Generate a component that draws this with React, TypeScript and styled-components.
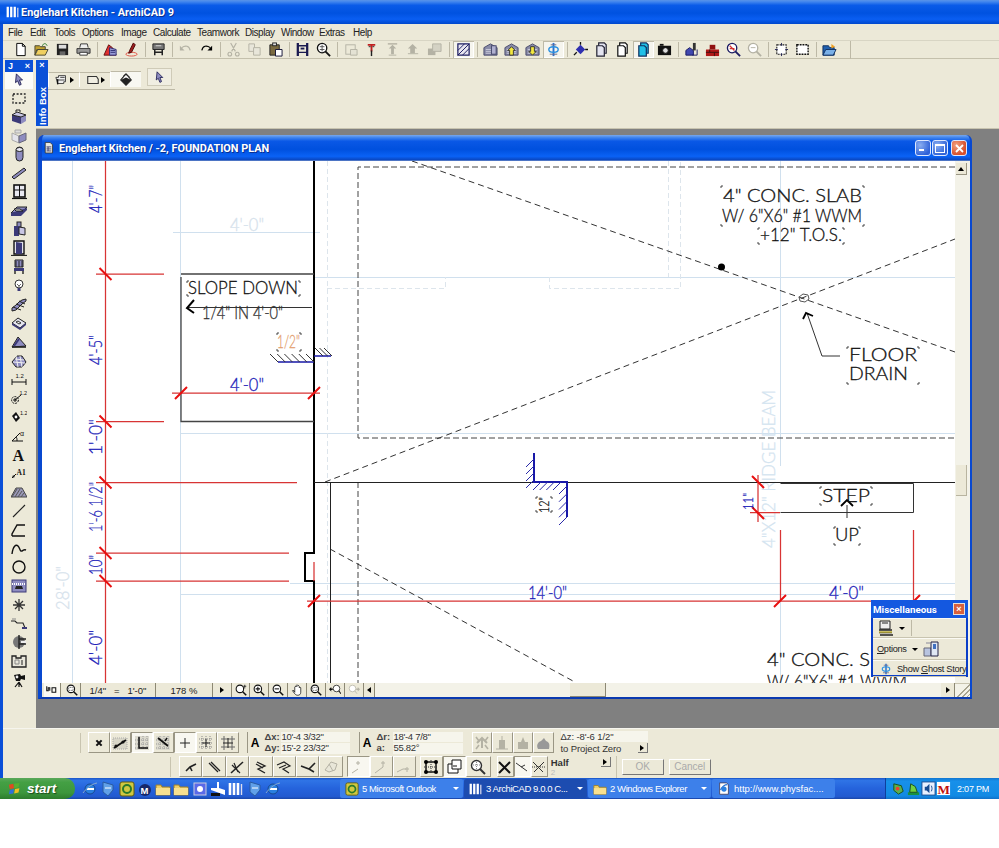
import React from "react";
import styled, { createGlobalStyle, css } from "styled-components";

const Global = createGlobalStyle`
  html, body { margin: 0; padding: 0; background: #fff; }
  body { font-family: "Liberation Sans", Arial, sans-serif; }
`;

const UI = `"Liberation Sans", Arial, sans-serif`;
const HEAD = `Roboto, "Liberation Sans", sans-serif`;

const Frame = styled.div`width: 999px; height: 799px; display: flex; flex-direction: column; overflow: hidden; background: #ece9d8;`;
const TitleBar = styled.div`
  height: 24px; flex: none; display: flex; align-items: center; gap: 1px; padding-left: 6px;
  background: linear-gradient(180deg, #5a94e8 0, #3f84ee 8%, #0a5be8 22%, #0052e0 55%, #0a5ef2 80%, #0048cc 100%);
`;
const TitleText = styled.span`font: 700 10.9px ${HEAD}; color: #fff; white-space: nowrap; text-shadow: 1px 1px 0 #0a2f90;`;
const Client = styled.div`flex: 1; display: flex; flex-direction: column; min-height: 0; border-left: 3px solid #0a4fd8;`;
const MenuBar = styled.div`height: 16px; flex: none; display: flex; align-items: center; padding-left: 5px;`;
const MenuItem = styled.span<{ $w: number }>`width: ${p => p.$w}px; flex: none; font: 10px ${UI}; letter-spacing: -.45px; color: #222;`;
const ToolBar = styled.div`
  height: 19px; flex: none; display: flex; align-items: center; padding-left: 7px;
  border-top: 1px solid #d8d5c4; border-bottom: 1px solid #c4c0ac; box-sizing: border-box;
`;
const TBtn = styled.div<{ $on?: boolean }>`
  width: 21px; height: 17px; flex: none; display: flex; align-items: center; justify-content: center;
  ${p => p.$on && css`background: #f6f5ee; box-shadow: inset 1px 1px 0 #bdb9a6, inset -1px -1px 0 #fff;`}
`;
const TSep = styled.div<{ $w?: number }>`
  width: ${p => p.$w ?? 6}px; height: 15px; flex: none; position: relative;
  &::after { content: ""; position: absolute; left: 45%; top: 0; bottom: 0; width: 1px; background: #bdb9a6; }
`;
const ToolEnd = styled.div`width: 10px; height: 18px; border-right: 1px solid #bdb9a6;`;
const Ico = styled.svg<{ $s?: number }>`width: ${p => p.$s ?? 16}px; height: ${p => p.$s ?? 16}px; flex: none; display: block;`;

const Workspace = styled.div`flex: 1; display: flex; min-height: 0;`;
const Palette = styled.div`width: 33px; flex: none; padding: 1px 3px 0 2px; box-sizing: border-box;`;
const PaletteHead = styled.div`height: 12px; background: #0a50d8; color: #fff; display: flex; justify-content: space-between; align-items: center; padding: 0 3px; font: 700 9px ${UI};`;
const PaletteList = styled.div`display: flex; flex-direction: column;`;
const PaletteTool = styled.div<{ $on?: boolean }>`
  height: ${p => (p.$on ? 16.6 : 18.78)}px; flex: none; display: flex; align-items: center; justify-content: center;
  ${p => p.$on && `background: #fcfcf8;`}
`;
const Main = styled.div`flex: 1; min-width: 0; display: flex; flex-direction: column;`;
const InfoArea = styled.div`height: 70px; flex: none; display: flex; align-items: flex-start; padding-top: 1px; box-sizing: border-box; border-bottom: 1px solid #c8c4b0;`;
const InfoStrip = styled.div`width: 12px; height: 66px; flex: none; background: #0a50d8; color: #fff; display: flex; flex-direction: column; align-items: center;`;
const InfoClose = styled.span`font: 700 9px ${UI}; line-height: 11px;`;
const InfoLabel = styled.span`font: 700 9.5px ${UI}; writing-mode: vertical-rl; transform: rotate(180deg); margin-top: 16px; white-space: nowrap;`;
const InfoPanel = styled.div`width: 127px; height: 30px; flex: none; display: flex; align-items: flex-end; padding-bottom: 1px; box-sizing: border-box; border-bottom: 1px solid #bdb9a6;`;
const InfoBtn = styled.div<{ $on?: boolean }>`
  width: 31px; height: 15px; flex: none; display: flex; align-items: center; justify-content: center; gap: 1px; margin-bottom: 1px;
  box-sizing: border-box; border-top: 1px solid #bdb9a6; border-left: 1px solid #fff;
  ${p => p.$on && `background: #f8f8f2; height: 16px;`}
`;
const InfoArrowBox = styled.div`width: 25px; height: 18px; margin: 0 0 2px 6px; display: flex; align-items: center; justify-content: center; box-sizing: border-box; border: 1px solid #cfcbb8; background: #f0eee2;`;
const Tri = styled.span<{ $d?: string; $c?: string }>`
  width: 0; height: 0; flex: none; display: block;
  ${p => (p.$d === "l"
    ? `border: 3px solid transparent; border-left: 0; border-right: 4px solid ${p.$c ?? "#000"};`
    : p.$d === "u"
    ? `border: 3px solid transparent; border-top: 0; border-bottom: 4px solid ${p.$c ?? "#000"};`
    : p.$d === "d"
    ? `border: 3px solid transparent; border-bottom: 0; border-top: 3px solid ${p.$c ?? "#000"};`
    : `border: 3px solid transparent; border-right: 0; border-left: 4px solid ${p.$c ?? "#000"};`)}
`;

const Mdi = styled.div`flex: 1; min-height: 0; background: #808080; padding: 6px 27px 29px 2px;`;
const DocWindow = styled.div`
  height: 100%; box-sizing: border-box; display: flex; flex-direction: column; border-radius: 6px 6px 0 0; overflow: hidden;
  background: #0a3cb8; border-left: 4px solid #0848d0; border-right: 2px solid #0848d0; border-bottom: 2px solid #0a3ab0;
`;
const DocTitle = styled.div`
  height: 26px; flex: none; margin-left: -4px; margin-right: -2px; display: flex; align-items: center; gap: 2px; padding: 0 5px 0 6px;
  background: linear-gradient(180deg, #7aa8ea 0, #3f84ee 10%, #0a58e6 24%, #0050de 55%, #0a62f6 82%, #0a46c0 96%, #8aa0c8 100%);
`;
const DocTitleText = styled(TitleText)`flex: 1;`;
const WinBtn = styled.div<{ $red?: boolean }>`
  width: 16px; height: 16px; flex: none; border-radius: 3px; border: 1px solid #dde8ff; box-sizing: border-box;
  margin-left: ${p => (p.$red ? "1px" : "-1px")};
  background: ${p => (p.$red ? "radial-gradient(circle at 30% 30%, #f0a080, #d8502c 70%)" : "radial-gradient(circle at 30% 30%, #8aaef0, #2f62d8 75%)")};
  color: #fff; display: flex; align-items: center; justify-content: center;
`;
const CanvasRow = styled.div`height: 522px; flex: none; display: flex; position: relative; background: #fff;`;
const Drawing = styled.svg`width: 913px; height: 522px; flex: none; display: block;`;
const VScroll = styled.div`width: 15px; flex: none; background: #f3f2e8; display: flex; flex-direction: column; padding: 2px 3px 0 1px; box-sizing: border-box;`;
const ScrollBtn = styled.div`height: 12px; flex: none; background: #ece9d8; display: flex; align-items: center; justify-content: center; box-sizing: border-box; border-right: 1px solid #9a9684; border-bottom: 1px solid #9a9684;`;
const VThumb = styled.div`height: 31px; margin-top: 290px; background: #ece9d8; box-sizing: border-box; border-right: 1px solid #b8b4a0; border-bottom: 1px solid #b8b4a0;`;

const StatusBar = styled.div`height: 14px; flex: none; display: flex; align-items: stretch; background: #f3f2e8; font: 9.5px ${UI}; color: #222;`;
const StatCell = styled.div<{ $w: number; $on?: boolean }>`
  width: ${p => p.$w}px; flex: none; box-sizing: border-box; display: flex; align-items: center; justify-content: center; gap: 2px;
  border-right: 1px solid #8c8874; background: ${p => (p.$on ? "#fbfaf4" : "#ece9d8")}; white-space: nowrap;
`;
const StatPad = styled.div`width: 2px; flex: none; background: #ece9d8;`;
const HTrack = styled.div<{ $w: number }>`width: ${p => p.$w}px; flex: none;`;
const HThumb = styled.div`width: 36px; flex: none; background: #ece9d8; box-sizing: border-box; border-right: 1px solid #8c8874; border-bottom: 1px solid #8c8874;`;
const Grip = styled.div`
  width: 15px; flex: none; box-sizing: border-box; border-top: 1px solid #c8c4b0; background-color: #f3f2e8;
  background-image: linear-gradient(135deg, transparent 52%, #a8a490 52% 58%, transparent 58% 70%, #a8a490 70% 76%, transparent 76% 86%, #a8a490 86% 92%, transparent 92%);
`;

const MiscPal = styled.div`
  position: absolute; right: 2px; bottom: 6px; width: 97px; height: 77px; box-sizing: border-box;
  background: #ece9d8; border: 2px solid #0a3ec8; border-top: 0; display: flex; flex-direction: column; font: 9.2px ${UI}; letter-spacing: -.3px; color: #222;
`;
const MiscHead = styled.div`height: 18px; flex: none; margin: 0 -2px; background: #1458e0; color: #fff; display: flex; align-items: center; justify-content: space-between; padding: 0 3px 0 2px; font: 700 9.8px ${HEAD}; letter-spacing: 0;`;
const MiscClose = styled.span`width: 12px; height: 12px; background: #d8603c; border: 1px solid #e8e0d8; box-sizing: border-box; display: flex; align-items: center; justify-content: center; font: 700 9px ${UI}; color: #fff;`;
const MiscRow = styled.div<{ $h: number; $pad: number }>`height: ${p => p.$h}px; flex: none; display: flex; align-items: center; gap: 5px; padding-left: ${p => p.$pad}px; box-sizing: border-box; border-bottom: 1px solid #c8c4b0; border-top: 1px solid #fbfaf4;`;
const MiscDiv = styled.span`width: 1px; height: 16px; background: #bdb9a6; margin-left: 1px;`;
const MiscText = styled.span`white-space: nowrap; u { text-decoration: underline; }`;

const Bottom = styled.div`height: 50px; flex: none; display: flex; flex-direction: column; padding-top: 2px; box-sizing: border-box; border-top: 1px solid #f6f5ee; gap: 1px;`;
const BarRow = styled.div<{ $left: number }>`height: 23px; flex: none; display: flex; align-items: center; padding-left: ${p => p.$left}px; font: 10px ${UI}; color: #333;`;
const Grab = styled.div`width: 7px; height: 20px; flex: none; border-left: 1px solid #c8c4b0;`;
const BarBtn = styled.div<{ $w?: number; $on?: boolean }>`
  width: ${p => p.$w ?? 20}px; height: 21px; flex: none; display: flex; align-items: center; justify-content: center; box-sizing: border-box;
  border-right: 1px solid #9a9684; border-bottom: 1px solid #9a9684; border-top: 1px solid #fff; border-left: 1px solid #fff;
  ${p => p.$on && `background: #f8f7f0; border-right-color: #fff; border-bottom-color: #fff; border-top-color: #9a9684; border-left-color: #9a9684;`}
`;
const BarGap = styled.div<{ $w: number }>`width: ${p => p.$w}px; flex: none;`;
const APill = styled.div`width: 16px; height: 21px; flex: none; box-sizing: border-box; border-left: 1px solid #9a9684; display: flex; align-items: center; justify-content: center; font: 700 12px ${UI}; color: #000;`;
const CoordGroup = styled.div<{ $w: number; $pad?: number; $end?: number }>`width: ${p => p.$w}px; flex: none; display: flex; flex-direction: column; gap: 1px; padding-left: ${p => p.$pad ?? 2}px; padding-right: ${p => p.$end ?? 9}px; box-sizing: border-box;`;
const CoordLine = styled.div`height: 10.5px; display: flex; align-items: center; white-space: nowrap; line-height: 10px;`;
const CoordLabel = styled.span`width: 16px; flex: none; font-weight: 700; color: #444; font-size: 9.5px;`;
const CoordValue = styled.span`flex: 1; background: #f6f5ec; height: 10.5px; padding-left: 1px; font-size: 9.5px; letter-spacing: -.3px;`;
const ZLine = styled.div`height: 10.5px; display: flex; align-items: center; justify-content: space-between; white-space: nowrap; font-size: 9.5px; padding-left: 1px;`;
const ZText = styled.span<{ $fill?: boolean }>`letter-spacing: -.1px; ${p => p.$fill && `background: #f6f5ec; flex: 1;`}`;
const MiniBtn = styled.span`width: 9px; height: 9px; display: flex; align-items: center; justify-content: center; border-right: 1px solid #777; border-bottom: 1px solid #777;`;
const HalfBox = styled.div`width: 69px; height: 22px; flex: none; display: flex; flex-direction: column; padding: 1px 5px 1px 3px; box-sizing: border-box; font: 700 9.5px ${UI}; color: #333; border-right: 1px solid #c8c4b0;`;
const HalfTop = styled.div`display: flex; justify-content: space-between; align-items: center;`;
const HalfSub = styled.div`color: #bbb; font-weight: 400; font-size: 8px; line-height: 9px;`;
const GhostBtn = styled.button`
  width: 42px; height: 16px; flex: none; padding: 0; margin: 0; font: 10px ${UI}; color: #aaa; background: #ece9d8;
  border: 1px solid #b8b4a0; border-right-color: #777; border-bottom-color: #777; border-top-color: #fff; border-left-color: #fff;
`;

const Taskbar = styled.div`
  height: 21px; flex: none; display: flex; align-items: stretch;
  background: linear-gradient(180deg, #1a55c8 0, #2f74e6 12%, #2563dc 50%, #225ad0 88%, #1a46a8 100%);
`;
const StartBtn = styled.div`
  width: 75px; flex: none; display: flex; align-items: center; gap: 5px; padding-left: 8px; box-sizing: border-box; border-radius: 0 10px 10px 0;
  background: linear-gradient(180deg, #5aa85a 0, #44a044 20%, #3c963c 70%, #2c7c2c 100%);
  font: italic 700 13.5px ${UI}; color: #fff; text-shadow: 1px 1px 1px #1a4a1a;
`;
const Quick = styled.div`width: 265px; flex: none; display: flex; align-items: center; padding-left: 7px; box-sizing: border-box; gap: 2.3px;`;
const TaskBtn = styled.div<{ $on?: boolean }>`
  width: 123px; flex: none; margin: 1px 1px 1px 0; border-radius: 2px; box-sizing: border-box; padding: 0 4px 0 5px;
  display: flex; align-items: center; gap: 3px; color: #fff; font: 9.5px ${UI}; white-space: nowrap;
  background: ${p => (p.$on ? "#1c4cb0" : "#3d80ea")};
`;
const TaskLabel = styled.span<{ $wide?: boolean }>`flex: 1; overflow: visible; letter-spacing: ${p => (p.$wide ? "0" : "-.42px")};`;
const Tray = styled.div`
  margin-left: auto; width: 114px; flex: none; display: flex; align-items: center; padding-left: 5px; box-sizing: border-box; gap: 0;
  background: linear-gradient(180deg, #1276d0 0, #1790ea 15%, #128ae4 85%, #1070c8 100%); border-left: 1px solid #0e3f9c; color: #fff; font: 9px ${UI};
`;
const Clock = styled.span`margin-left: 6px; white-space: nowrap; letter-spacing: -.2px;`;
const Blank = styled.div`height: 49px; background: #fff;`;

/* drawing text */
const CadText = styled.text<{ $c?: string; $sz?: number }>`
  font-family: Lato, "Liberation Sans", sans-serif; font-weight: 300;
  font-size: ${p => p.$sz ?? 17}px; fill: ${p => p.$c ?? "#111"}; stroke: ${p => p.$c ?? "#111"}; stroke-width: .28px;
`;

const S = (p: any) => <path fill="none" stroke="#000" {...p} />;
const P3 = "#3c3a78", P2 = "#8e8cc0", P1 = "#c8c6e4", G = "#b4b2a4";

const folderIcon = (a: string, b: string) => <><path d="M1 4h5l1 1h5v3H3l-2 6z" fill={a} stroke="#443" /><path d="M4 8h11l-3 6H1z" fill={b} stroke="#443" /></>;
const houseIcon = (extra?: any) => <><path d="M1 6L8 2l7 4v8H1z" fill="#8a8ca8" stroke="#44466a" /><path d="M3 8h10M3 10h10M3 12h10" stroke="#c8c8d8" />{extra}</>;
const doc = (f: string, s = "#223") => <><path d="M5 1h6l2 2v9H5z" fill={f} stroke={s} strokeWidth="1.3" /><path d="M3 4h6l2 2v9H3z" fill={f} stroke={s} strokeWidth="1.3" /></>;
const mag = (c: string, inner?: any) => <><circle cx="6.5" cy="6.5" r="5" fill="#fff" stroke={c} strokeWidth="1.4" />{inner}<path d="M10 10l5 5" stroke={c} strokeWidth="2" /></>;

const I: Record<string, any> = {
  newDoc: <><path d="M4 1.5h6l3 3v10H4z" fill="#fff" stroke="#000" /><path d="M10 1.5v3h3" fill="none" stroke="#000" /></>,
  open: <>{folderIcon("#c0a030", "#efcf60")}<path d="M9 4c1-3 4-3 5 0" fill="none" stroke="#2a7a2a" /></>,
  save: <><rect x="2" y="2" width="12" height="12" fill="#222" /><rect x="4" y="3" width="8" height="4" fill="#ddd" /><rect x="5" y="10" width="6" height="4" fill="#666" /></>,
  print: <><path d="M4 6l1-4h7l1 4" fill="#eee" stroke="#333" /><path d="M1 7h14v5H1z" fill="#999" stroke="#333" /><path d="M4 11h8v3H4z" fill="#fff" stroke="#333" /></>,
  plot: <><path d="M1 14L6 3l4 3 4 8z" fill="#e03030" stroke="#601010" /><path d="M7 6l7 2v6H7z" fill="#9a9cd8" stroke="#2c2c70" /><path d="M8 9h5M8 11h5" stroke="#2c2c70" /></>,
  pen: <><ellipse cx="8" cy="13" rx="6" ry="2" fill="none" stroke="#e05040" /><path d="M10 1l2 2-4 8-3 1 1-3z" fill="#a02020" stroke="#400" /></>,
  layout: <><path d="M2 2h12v6H2z" fill="#777" stroke="#222" /><path d="M4 8v6M12 8v6M4 11h8" stroke="#222" strokeWidth="1.6" /><path d="M5 4h6" stroke="#ddd" /></>,
  undo: <><S d="M4 6c4-3 8-2 9 3" stroke={G} strokeWidth="1.3" /><path d="M2 4v5h5z" fill={G} /></>,
  redo: <><S d="M12 6c-4-3-8-2-9 3" strokeWidth="1.3" /><path d="M14 4v5H9z" fill="#000" /></>,
  cut: <S stroke={G} strokeWidth="1.2" d="M5 1l5 9M11 1L6 10M4 11a2 2 0 1 0 .1 0M12 11a2 2 0 1 0 .1 0" />,
  copy: <><path d="M2 2h6v8H2z" fill="#e8e6da" stroke={G} /><path d="M7 6h7v8H7z" fill="#e8e6da" stroke={G} /></>,
  paste: <><path d="M2 3h10v11H2z" fill="#7a6a40" stroke="#222" /><rect x="5" y="1" width="4" height="3" fill="#ddd" stroke="#222" /><path d="M8 8h7v7H8z" fill="#fff" stroke="#113" /></>,
  hgrid: <><path d="M3 1v14M13 1v14" stroke="#1a1a50" strokeWidth="2.4" /><path d="M3 4h10M3 11h10" stroke="#1a1a50" strokeWidth="1.4" /><path d="M6 7h4" stroke="#1a1a50" strokeWidth="2" /></>,
  magBlack: mag("#111", <path d="M4 5h5M4 8h5M6.5 3v7" stroke="#555" />),
  gSq: <><rect x="3" y="3" width="10" height="10" fill="none" stroke={G} /><path d="M8 8h7v6H8z" fill="#e4e2d4" stroke={G} /></>,
  redT: <><path d="M4 2h8v2H9v6H7V4H4z" fill="#c02020" /><path d="M8 9v6" stroke="#222" strokeWidth="1.5" /><path d="M5 5h2M9 5h2" stroke="#222" /></>,
  upGrey: <><path d="M3 2h10" stroke={G} strokeWidth="1.5" /><path d="M8 3l4 4H9.5v6h-3V7H4z" fill={G} /><path d="M4 14h8" stroke={G} /></>,
  gArrow: <><path d="M2 13h11v-1H2z" fill={G} /><path d="M7 2l5 5H9.5v5h-5V7H2z" fill={G} /></>,
  gSq2: <><path d="M1 7h8v7H1z" fill={G} /><path d="M6 2h9v8H6z" fill="#d4d2c4" stroke={G} /></>,
  hatch: <><rect x="2" y="2" width="12" height="12" fill="#e8e6f0" stroke="#1a1a60" strokeWidth="1.3" /><path d="M2 9l7-7M2 14L14 2M7 14l7-7" stroke="#1a1a60" /></>,
  house: <>{houseIcon()}<rect x="9" y="4" width="5" height="9" fill="#b0b0d0" stroke="#44466a" /></>,
  houseUp: houseIcon(<path d="M8 5l4 4h-2v5H6V9H4z" fill="#f4e840" stroke="#333" />),
  houseDown: houseIcon(<path d="M8 14l4-4h-2V5H6v5H4z" fill="#f4e840" stroke="#333" />),
  spin: <><path d="M8 1v14" stroke="#2a70d0" strokeWidth="2" /><ellipse cx="8" cy="8" rx="5" ry="3" fill="none" stroke="#2a90e0" strokeWidth="1.5" /><path d="M5 3h6M4 13h8" stroke="#6a6a8a" /></>,
  diamond: <><path d="M8 3l5 5-5 5-5-5z" fill="#3030b0" /><path d="M1 14l3-3M13 8h3M8 3V0" stroke="#111" strokeWidth="1.4" /></>,
  doc2: doc("#e4e4f0"),
  doc3: doc("#fff", "#111"),
  docCyan: doc("#20c0e8", "#103060"),
  camera: <><rect x="1" y="4" width="14" height="10" fill="#111" /><circle cx="9" cy="9" r="3" fill="#ddd" stroke="#111" /><rect x="3" y="2" width="4" height="2" fill="#111" /></>,
  blueHouse: <><path d="M2 14V9l4-3 4 3v5z" fill="#4048b0" stroke="#181860" /><path d="M11 1v8" stroke="#333" strokeWidth="3" /><path d="M9 14h5V8" fill="none" stroke="#181860" /></>,
  brick: <><path d="M1 8h14v7H1z" fill="#b01818" /><path d="M1 11h14M5 8v3M10 11v4" stroke="#401010" /><path d="M5 3h6v5H5z" fill="#901010" /></>,
  magRed: mag("#1a1a60", <path d="M4 4l5 5M4 7h5" stroke="#d03030" strokeWidth="1.4" />),
  magGrey: mag(G, <path d="M4 6h5" stroke={G} />),
  dotA: <><rect x="3" y="3" width="10" height="10" fill="#fff" stroke="#222" strokeDasharray="2 1" strokeWidth="1.2" /><path d="M1 8h3M12 8h3M8 1v3M8 12v3" stroke="#225" /></>,
  dotB: <rect x="2" y="3" width="12" height="10" fill="#fff" stroke="#111" strokeDasharray="2 1" strokeWidth="1.5" />,
  folderBlue: <><path d="M1 4h6l1 2h5v8H1z" fill="#2060b0" stroke="#103060" /><path d="M4 8h11l-3 6H1z" fill="#7ab0e8" stroke="#103060" /><path d="M10 2l4 3-4 2" fill="#f0a020" /></>,
  arrow: <path d="M5 1l7 7H8.5l2 5-2 1-2-5L4 11z" fill={P2} stroke="#1a1a50" />,
  marquee: <rect x="2" y="4" width="12" height="9" fill="none" stroke="#222" strokeWidth="1.3" strokeDasharray="2 1.6" />,
  wall: <><path d="M1 6l9 2v7l-9-3z" fill={P3} /><path d="M10 8l5-2v6l-5 3z" fill={P2} /><path d="M1 6l5-3 9 3-5 2z" fill={P1} stroke="#222" /><path d="M5 3V1h4v2" fill="none" stroke="#222" /></>,
  curtain: <><path d="M1 5l7 3v7l-7-3z" fill="#e4e4ec" stroke="#aaa" /><path d="M8 8l7-3v7l-7 3z" fill={P2} stroke="#667" /><path d="M4 2h6v3H4z" fill="#ddd" stroke="#aaa" /></>,
  column: <><rect x="5" y="1" width="7" height="14" rx="3.5" fill={P2} stroke="#222" /><ellipse cx="8.5" cy="3.5" rx="3.4" ry="2" fill="#e8e8f4" stroke="#222" /></>,
  beam: <><path d="M1 12L13 3l2 2L3 14z" fill={P2} stroke="#222" /><path d="M1 12l2 2" stroke="#222" /></>,
  frontWin: <><rect x="3" y="1" width="11" height="12" fill="#e8e8f0" stroke="#111" strokeWidth="1.6" /><path d="M8.5 1v12M3 6h11" stroke="#111" /><path d="M1 14.5h15" stroke="#111" strokeWidth="1.2" /></>,
  slab: <><path d="M0 10l6-6h10l-6 6z" fill={P2} stroke="#222" /><path d="M0 10v3h10l6-6V5" fill={P3} /><path d="M3 6h6l3 2H5z" fill="#eee" stroke="#222" /></>,
  block: <><rect x="6" y="1" width="4" height="5" fill={P2} stroke="#222" /><path d="M3 5h5v10H3z" fill={P3} /><path d="M8 6l6 1v7l-6-1z" fill={P1} stroke="#222" /></>,
  door: <><path d="M3 1h10v13H3z" fill="#e4e4ec" stroke="#111" strokeWidth="1.4" /><path d="M5 2l6 1v11H5z" fill={P3} /><path d="M0 15.4h16" stroke="#111" /></>,
  chair: <><path d="M4 1h8v7H4z" fill={P2} stroke="#222" /><path d="M5 2v6M8 2v6M11 2v6" stroke="#222" /><path d="M3 9h10v3H3z" fill={P3} /><path d="M4 12v3M12 12v3" stroke="#222" strokeWidth="1.4" /></>,
  lamp: <><circle cx="8" cy="6" r="4" fill="#fff" stroke="#333" /><path d="M6 6l2 2 2-2M8 8v2" stroke="#666" fill="none" /><path d="M6.5 10h3v3h-3z" fill={P3} /></>,
  stairs: <><path d="M1 12l4-3h0l3-3 3-2 4-1v2L11 8l-3 3-3 3-4 1z" fill={P2} stroke="#222" /><path d="M2 11l8 3M5 8l8 3M8 5l6 3" stroke="#222" /></>,
  slab2: <><path d="M1 8l6-5 8 5-6 5z" fill="#e4e4f0" stroke="#222" /><path d="M1 8v2l8 5 6-5V8l-6 5z" fill={P3} /><path d="M7 6l3 2-2 1-3-2z" fill="#f0f0f0" stroke="#333" /></>,
  roof: <><path d="M1 13L7 3l8 9z" fill={P2} stroke="#222" /><path d="M1 13h14" stroke="#222" strokeWidth="1.6" /><path d="M3 12l5-7" stroke={P3} strokeWidth="2" /></>,
  mesh: <><path d="M1 9l5-6h5l4 6-4 5H5z" fill={P2} stroke="#222" /><path d="M2 9l12 1M4 6l9 1M5 3l2 11M9 3l2 11" stroke="#eee" /></>,
  dimLin: <><S d="M1 11h14M1 8v6M15 8v6" stroke="#111" /><text x="4.5" y="7" fontSize="6" fontFamily={UI} fill="#111">1.2</text></>,
  dimRad: <><circle cx="4" cy="10" r="3.4" fill="none" stroke="#111" strokeDasharray="2 1" /><path d="M4 10L10 5" stroke="#111" /><path d="M2 10h4M4 8v4" stroke="#111" /><text x="8.5" y="5" fontSize="5.5" fontFamily={UI} fill="#111">1.2</text></>,
  dimLev: <><path d="M5 3l4 6-4 4-4-6z" fill="#111" /><circle cx="5" cy="8" r="1.4" fill="#fff" /><text x="9" y="6" fontSize="5.5" fontFamily={UI} fill="#111">1.2</text></>,
  dimAng: <><S d="M1 13L9 5M1 13h11" stroke="#111" /><S d="M6 13c0-2 0-3-1-4" stroke="#111" /><text x="9" y="8" fontSize="7" fontFamily={UI} fill="#111">α</text></>,
  textA: <text x="1.5" y="14" fontSize="16" fontWeight="700" fontFamily="Liberation Serif" fill="#111">A</text>,
  labelA: <><path d="M1 13l4-4" stroke="#111" /><path d="M1 13l1-3 2 2z" fill="#111" /><text x="5.5" y="10" fontSize="7.5" fontWeight="700" fontFamily="Liberation Serif" fill="#111">A1</text></>,
  fill: <><path d="M0 13l5-9h6l5 9z" fill="#9a98b8" stroke="#444" /><path d="M1 13l5-8M4 13l5-8M7 13l4-6M10 13l3-4" stroke="#555" /></>,
  line: <path d="M2 14L14 2" stroke="#222" strokeWidth="1.1" />,
  poly: <S d="M1 14h13M1 14v-2l5-9h8" stroke="#111" strokeWidth="1.4" />,
  spline: <S d="M1 14c1-8 4-10 6-8s2 6 4 5 2-2 4-1" stroke="#111" strokeWidth="1.4" />,
  circle: <circle cx="8" cy="8" r="6" fill="none" stroke="#111" strokeWidth="1.4" />,
  zone: <><rect x="1" y="2" width="14" height="12" fill={P2} stroke={P3} /><path d="M1 6h14" stroke="#fff" strokeWidth="2" strokeDasharray="1 1" /><path d="M4 11h8l-1-3H5z" fill="#222" /></>,
  star: <S stroke="#333" strokeWidth="1.3" d="M8 2v12M2 8h12M4 4l8 8M12 4l-8 8" />,
  section: <><path d="M0 6h4l2 2h6l2 5h2" fill="none" stroke="#222" strokeWidth="1.1" /><path d="M11 13h5" stroke={P3} strokeWidth="2" /><path d="M1 4h4" stroke="#888" /></>,
  detail: <><circle cx="8" cy="8" r="6" fill="#777" /><path d="M8 1v14M8 5h7M8 10h7" stroke="#222" strokeWidth="1.4" /><path d="M10 7h5v2h-5z" fill="#eee" /></>,
  drawing: <><path d="M1 3h4v2h5V3h5v11H1z" fill="#e8e6da" stroke="#222" strokeWidth="1.3" /><path d="M4 7h4v4H4z" fill="none" stroke="#888" /><path d="M11 7v5" stroke="#222" /></>,
  figure: <><path d="M3 3l6-1 1 2 4-1v5l-4-1-1 2H5z" fill="#111" /><circle cx="6" cy="5" r="1.4" fill="#eee" /><path d="M8 10L4 15M8 10l3 5M8 10v5" stroke="#111" strokeWidth="1.2" /></>,
  infoA: <><path d="M1 5h3V3h8v7h-2v2H3z" fill="#eee" stroke="#333" /><path d="M3 8h8M6 5h5" stroke="#333" /><path d="M3 7v6" stroke="#111" strokeWidth="1.6" /></>,
  infoB: <path d="M2 4h10l2 3v5H2z" fill="#f0eee2" stroke="#333" strokeWidth="1.2" />,
  infoC: <><path d="M8 1L14 8 8 14 2 8z" fill="#fff" stroke="#111" strokeWidth="1.2" /><path d="M2 8l6-3 6 3-6 6z" fill="#222" /><path d="M5 3c2-2 6-1 7 2" fill="none" stroke="#333" /></>,
  bx: <path d="M5 5l6 6M11 5l-6 6" stroke="#111" strokeWidth="2.4" />,
  snapA: <><path d="M1 3h14v11H1z" fill="#d8d6c8" stroke="#aaa" strokeDasharray="1 1" /><path d="M2 13l12-8" stroke="#111" strokeWidth="1.8" /><circle cx="4" cy="11" r="1.6" fill="#111" /><circle cx="11" cy="7" r="1.6" fill="#111" /></>,
  snapB: <><path d="M1 1h14v14H1z" fill="#dcdace" /><path d="M1 5h14M1 9h14M1 13h14M5 1v14M9 1v14M13 1v14" stroke="#999" strokeDasharray="1 1" /><path d="M5 2v11h9" fill="none" stroke="#111" strokeWidth="1.5" /></>,
  snapC: <><path d="M1 1h14v14H1z" fill="#dcdace" /><path d="M1 5h14M1 9h14M1 13h14M5 1v14M9 1v14M13 1v14" stroke="#999" strokeDasharray="1 1" /><path d="M3 3l10 8" stroke="#111" strokeWidth="1.8" /><path d="M12 3l-2 3" stroke="#111" strokeWidth="1.4" /></>,
  plus: <path d="M8 3v10M3 8h10" stroke="#222" />,
  gridA: <><path d="M1 4h14M1 8h14M1 12h14M4 1v14M8 1v14M12 1v14" stroke="#888" strokeDasharray="1 1" /><path d="M8 4v8M4 8h8" stroke="#222" /></>,
  gridB: <><path d="M1 4h14M1 12h14M4 1v14M12 1v14" stroke="#666" /><path d="M8 3v10M3 8h10" stroke="#222" /></>,
  geoA: <path d="M3 12l4-4 6-3M7 8l2 4" fill="none" stroke="#222" strokeWidth="1.6" />,
  geoB: <path d="M3 4l9 9M5 3l9 9" stroke="#222" strokeWidth="1.3" />,
  geoC: <><path d="M2 14L14 3" stroke="#222" strokeWidth="1.5" /><path d="M3 6l8 8M5 4l4 9" stroke="#222" strokeWidth="1.2" /></>,
  geoD: <path d="M4 3l8 4-7 3 7 4M3 5l7 4" fill="none" stroke="#222" strokeWidth="1.3" />,
  geoE: <path d="M1 6l7-3 6 4-7 3 6 4M3 9l7-3" fill="none" stroke="#222" strokeWidth="1.2" />,
  geoF: <path d="M1 7l8 3 6-6M9 10l5 3" fill="none" stroke="#222" strokeWidth="1.6" />,
  geoG: <path d="M2 11l6-8 6 2-2 6-6 2zM6 5l4 7" fill="#e8e6d8" stroke={G} />,
  geoH: <path d="M8 2v4M6 4h4M2 14l6-4" fill="none" stroke={G} />,
  geoI: <path d="M10 2v6M8 4h4M2 14l8-6" fill="none" stroke={G} />,
  geoJ: <path d="M1 13l6-3h3M11 8v5M9 10h4" fill="none" stroke={G} />,
  boxA: <><rect x="3" y="3" width="10" height="10" fill="none" stroke="#111" strokeWidth="1.5" /><circle cx="3" cy="3" r="2" /><circle cx="13" cy="3" r="2" /><circle cx="3" cy="13" r="2" /><circle cx="13" cy="13" r="2" /><path d="M1 8h14M8 1v14" stroke="#333" strokeDasharray="1 1" /></>,
  boxB: <><path d="M2 5h10v9H2z" fill="#fff" stroke="#111" /><path d="M6 1h9v9H6z" fill="#fff" stroke="#111" /><path d="M7 7h4" stroke="#111" /></>,
  magSnap: mag("#333", <path d="M3 6h7M6.5 3v7" stroke="#888" strokeDasharray="1 1" />),
  xBig: <path d="M2 3l11 11M13 3L2 14" stroke="#111" strokeWidth="2" />,
  lineSm: <path d="M2 4l11 8M7 8l4-2" stroke="#333" />,
  xSm: <><path d="M2 3l10 10M13 3L3 13" stroke="#333" /><path d="M1 8h14" stroke="#333" strokeDasharray="1 1" /></>,
  figA: <><path d="M8 3v10M3 8l5-5 5 5" fill="none" stroke={G} strokeWidth="2" /><path d="M2 2l3 4M14 2l-3 4M2 14l3-4M14 14l-3-4" stroke={G} strokeWidth="1.6" /></>,
  figB: <><path d="M5 5h6v9H5z" fill={G} /><path d="M2 14h12" stroke={G} /><path d="M8 1v4" stroke={G} /></>,
  figC: <path d="M8 2l2 5h3v7H3V7h3z" fill={G} />,
  figD: <><path d="M3 14c-2-4 0-7 3-8l3-3 2 3c3 1 4 3 3 8z" fill="#999" /></>,
  docTitle: <><path d="M1.5.5h6l3 3v10h-9z" fill="#e8e8e0" stroke="#333" /><path d="M3 6h6M3 8.5h6M3 11h6M5 6v5" stroke="#336" /></>,
  flag: <><path d="M1 3l5-1 1 5-5 1z" fill="#e04a20" /><path d="M7 2l6-1-1 5-5 1z" fill="#58b030" /><path d="M2 9l5-1-1 5-5 1z" fill="#3070d8" /><path d="M8 8l5-1-1 5-5 1z" fill="#f0c020" /></>,
  ie: <><circle cx="8" cy="8" r="5" fill="#2a80e0" stroke="#1a4a90" /><path d="M5 8h7" stroke="#fff" strokeWidth="2" /><path d="M1 12c3-4 8-9 14-10" fill="none" stroke="#8ac" /></>,
  sky: <><path d="M3 1l10 3v5l-5 6-5-4z" fill="#60a0e8" stroke="#2a5aa0" /><path d="M5 7h6" stroke="#fff" /></>,
  outlook: <><rect x="1" y="1" width="14" height="14" rx="2" fill="#d0c840" stroke="#605a10" /><circle cx="8" cy="8" r="4" fill="none" stroke="#2a7a2a" strokeWidth="2" /></>,
  mBtn: <><circle cx="8" cy="9" r="6" fill="#16286a" /><text x="3.6" y="12.5" fontSize="9.5" fontWeight="700" fontFamily={UI} fill="#fff">M</text></>,
  folder: <><path d="M1 4h5l1 2h8v8H1z" fill="#f0cf68" stroke="#9a8030" /><path d="M1 7h14v7H1z" fill="#f8e090" /></>,
  qApp: <><rect x="2" y="2" width="12" height="12" fill="#5a6ae8" stroke="#ccd" /><circle cx="8" cy="8" r="3" fill="#fff" /></>,
  qWhite: <><path d="M7 1v6H1v2l14 5V9L9 7V1z" fill="#fff" /><path d="M1 12h9v3H1z" fill="#111" /></>,
  acad: <><path d="M2 2v12M6 2v12M10 2v12" stroke="#fff" strokeWidth="2.6" /><path d="M13.5 3v11" stroke="#dde" strokeWidth="1.4" /></>,
  ieDoc: <><path d="M3 1h8l2 2v11H3z" fill="#fff" stroke="#446" /><path d="M4 9c2-4 5-6 8-6" stroke="#2a70d0" fill="none" strokeWidth="1.5" /><circle cx="8" cy="8" r="3" fill="#2a80e0" /></>,
  trayA: <><path d="M3 3l8 2 2 6-5 3-5-4z" fill="#5ab050" stroke="#1a501a" /><circle cx="7" cy="8" r="2" fill="#f04030" /></>,
  trayB: <><path d="M2 12h12v3H2z" fill="#1a9040" /><path d="M5 3l5 3 2 6H4z" fill="#70d040" stroke="#1a501a" /></>,
  trayC: <><rect x="1" y="1" width="14" height="14" fill="#e8f0ff" stroke="#184a90" /><path d="M4 6h2l3-3v10l-3-3H4z" fill="#184a90" /><path d="M11 5c1 2 1 4 0 6" stroke="#184a90" fill="none" /></>,
  trayD: <><rect x="1" y="1" width="14" height="14" fill="#fff" /><text x="1.6" y="13.4" fontSize="14" fontWeight="700" fontFamily="Liberation Serif" fill="#c01010">M</text></>,
  miscA: <><path d="M2 1h10v8H2z" fill="#eee" stroke="#222" /><path d="M1 10h13M1 12.5h13M2 15h13" stroke="#222" strokeWidth="1.4" /><path d="M4 3h6" stroke="#222" /><path d="M1 11h13v2H1z" fill="#d0c040" opacity=".7" /></>,
  miscB: <><path d="M1 7h7v8H1z" fill="#b8c4e0" stroke="#667" /><path d="M8 1h7v14H8z" fill="#e0e8f4" stroke="#224" /><path d="M10 3h3v5h-3z" fill="#4070c0" /><path d="M3 2h4" stroke="#889" /></>,
  qStat1: <><path d="M1 3v6h2V5h2v4M8 5h5v6H8z" fill="none" stroke="#111" strokeWidth="1.4" /></>,
  zoomPm: <>{mag("#111")}<path d="M13 1v5M11 3h4" stroke="#111" /></>,
  zoomIn: mag("#111", <path d="M3.5 6.5h6M6.5 3.5v6" stroke="#111" strokeWidth="1.4" />),
  zoomOut: mag("#111", <path d="M3.5 6.5h6" stroke="#111" strokeWidth="1.4" />),
  hand: <path d="M3 8l2 3V4l1-1 1 1V2l1-1 1 1v1l1-1 1 1v2l1-1 1 1v6c0 3-2 4-4 4S6 14 5 13L2 9z" fill="#fff" stroke="#111" />,
  zoomFit: mag("#111", <path d="M3.5 4.5h6v4h-6z" fill="none" stroke="#111" strokeDasharray="1 1" />),
  zoomPrev: <><path d="M0 7l3-3v2h2v2H3v2z" fill="#111" /><circle cx="10" cy="6" r="4.4" fill="#fff" stroke="#111" /><path d="M13 9l3 4" stroke="#111" strokeWidth="1.4" /></>,
  zoomNext: <><circle cx="6" cy="6" r="4.4" fill="#fff" stroke={G} /><path d="M9 9l3 4" stroke={G} /><path d="M16 7l-3-3v2h-2v2h2v2z" fill={G} /></>,
};

const Icon = ({ n, s }: { n: string; s?: number }) => <Ico $s={s} viewBox="0 0 16 16">{I[n]}</Ico>;

const topTools: (string | { n: string; on?: boolean } | number)[] = [
  "newDoc", "open", "save", "print", 0, "plot", "pen", 0, "layout", 0, "undo", "redo", 0, "cut", "copy", "paste", 0, "hgrid", "magBlack", 0,
  "gSq", "redT", "upGrey", "gArrow", "gSq2", 8, { n: "hatch", on: true }, 0, "house", "houseUp", "houseDown", { n: "spin", on: true }, 0,
  "diamond", "doc2", "doc3", { n: "docCyan", on: true }, "camera", 0, "blueHouse", "brick", "magRed", "magGrey", 0, "dotA", "dotB", 0, "folderBlue",
];
const palette = ["arrow", "marquee", "wall", "curtain", "column", "beam", "frontWin", "slab", "block", "door", "chair", "lamp", "stairs", "slab2", "roof", "mesh", "dimLin", "dimRad", "dimLev", "dimAng", "textA", "labelA", "fill", "line", "poly", "spline", "circle", "zone", "star", "section", "detail", "drawing", "figure"];
const menus: [string, number][] = [["File", 22], ["Edit", 24], ["Tools", 28], ["Options", 39], ["Image", 32], ["Calculate", 44], ["Teamwork", 48], ["Display", 36], ["Window", 38], ["Extras", 34], ["Help", 30]];

/* ------- drawing ------- */
const hatchLines = (x1: number, y1: number, x2: number, y2: number, n: number, dx: number, dy: number) =>
  Array.from({ length: n }, (_, i) => {
    const t = n > 1 ? i / (n - 1) : 0;
    const x = x1 + (x2 - x1) * t, y = y1 + (y2 - y1) * t;
    return `M${x} ${y}l${dx} ${dy}`;
  }).join("");

const ticks = (list: [number, number, 0 | 1][]) => list.map(([x, y, d]) => (d ? `M${x - 6} ${y + 6}L${x + 6} ${y - 6}` : `M${x - 6} ${y - 6}L${x + 6} ${y + 6}`)).join("");
const marks = (x1: number, y1: number, x2: number, y2: number) =>
  `M${x1} ${y1 + 2}v-2h2M${x2 - 2} ${y1}h2v2M${x1} ${y2 - 2}v2h2M${x2} ${y2 - 2}v2h-2`;

const T = ({ x, y, w, c, sz, rot, children }: any) => (
  <CadText x={x} y={y} $c={c} $sz={sz} textLength={w} lengthAdjust="spacingAndGlyphs" transform={rot ? `rotate(-90 ${x} ${y})` : undefined}>{children}</CadText>
);

const BLUE = "#1c1cb8", GUIDE = "#d0e0ee";

const Plan = () => (
  <Drawing viewBox="42 161 913 522">
    <path d={"M72.5 161V683M180.5 161V683M780.5 161V466M780.5 530V683M313 277.5H955M181 433.5H955M290 583.5H955M181 594.5H955M173 232.5H320"} stroke={GUIDE} fill="none" />
    <path d="M327.5 161V683M327 288.5H445.5V277M549.5 277V288.5H680.5V161M668.5 161V277" stroke="#dde5ec" fill="none" strokeDasharray="5 3" />
    <T x={230} y={231} w={34} c="#d6e2ec">4'-0"</T>
    <T x={69} y={610} w={44} c="#d6e2ec" rot={1}>28'-0"</T>
    <T x={775} y={548} w={158} c="#d3e4f0" rot={1}>4"X12" RIDGE BEAM</T>

    <path d="M955 167H358V438H955M358 482V683" stroke="#444" fill="none" strokeDasharray="6 3" />
    <path d="M412 161L955 352M325 482L955 239M330 549L573 681" stroke="#333" fill="none" strokeDasharray="6 4" />

    <path d="M314 161V553H305V581H314V683" stroke="#000" strokeWidth="2" fill="none" />
    <path d="M314 482.5H955M330.5 482V683" stroke="#222" fill="none" />
    <path d="M181 274H314M181 277V421.5H314" stroke="#444" strokeWidth="1.3" fill="none" />
    <path d="M187 307.5H312" stroke="#333" />
    <path d="M194 300L187 308L194 313" stroke="#000" strokeWidth="2" fill="none" />
    <circle cx="721.5" cy="267" r="3.5" fill="#000" />
    <path d="M799 297l4-3 5 1 1 4-4 3-5-1z" stroke="#555" fill="none" />
    <path d="M807 313L822 356H840" stroke="#333" fill="none" />
    <path d="M803 319L806 313L813 316" stroke="#000" strokeWidth="1.8" fill="none" />
    <path d="M780.5 483.5H913.5V512.5H780.5" stroke="#333" fill="none" />
    <path d="M847 505V518" stroke="#333" /><path d="M841 506L847 500L853 506" stroke="#000" strokeWidth="1.8" fill="none" />

    <path d="M105.5 161V683M96 274H164M96 421.5H164M96 482.5H297M96 553H289M96 581H289M172 393H320M307 601H955M780.5 530V601M913.5 530V601M314 562V581M750 512.5H780M758 475V522" stroke="#d83434" strokeWidth="1.25" fill="none" />
    <path d={ticks([[105.5, 274, 0], [105.5, 421.5, 0], [105.5, 482.5, 0], [105.5, 553, 0], [105.5, 581, 0], [181, 393, 1], [314, 393, 1], [314, 601, 1], [780, 601, 1], [914, 601, 1], [758, 482, 0], [758, 513, 0]])} stroke="#e81010" strokeWidth="2" fill="none" />

    <path d="M278 362H314M314 356H331" stroke="#1818a8" strokeWidth="1.6" fill="none" />
    <path d={hatchLines(270, 354, 306, 354, 6, 8, 8) + hatchLines(315, 348, 324, 348, 3, 8, 8)} stroke="#333" />
    <path d="M534 453V482H567V517" stroke="#1818a8" strokeWidth="2" fill="none" />
    <path d={hatchLines(534, 459, 534, 480, 4, -8, 8) + hatchLines(541, 482, 561, 482, 4, -8, 8) + hatchLines(567, 486, 567, 517, 5, -8, 8)} stroke="#2a2aa8" />

    <T x={188} y={294} w={110}>SLOPE DOWN</T>
    <T x={202} y={319} w={81} c="#333">1/4" IN 4'-0"</T>
    <T x={277} y={348} w={23} c="#e4a070">1/2"</T>
    <T x={723} y={202} w={139}>4" CONC. SLAB</T>
    <T x={722} y={222} w={140}>W/ 6"X6" #1 WWM</T>
    <T x={760} y={241} w={82}>+12"  T.O.S.</T>
    <T x={849} y={361} w={68}>FLOOR</T>
    <T x={849} y={380} w={59}>DRAIN</T>
    <T x={822} y={502} w={48}>STEP</T>
    <T x={835} y={541} w={24}>UP</T>
    <T x={767} y={666} w={139}>4" CONC. SLAB</T>
    <T x={767} y={688} w={140}>W/ 6"X6" #1 WWM</T>
    <T x={549} y={513} w={16} sz={14} rot={1}>12"</T>
    <path d={marks(721, 186, 864, 226) + marks(758, 228, 844, 244) + marks(847, 347, 919, 384) + marks(820, 487, 872, 505) + marks(834, 527, 860, 545) + marks(187, 281, 300, 296) + marks(277, 333, 301, 351) + marks(536, 497, 552, 512)} stroke="#333" fill="none" strokeWidth=".9" />

    <T x={102} y={213} w={28} c={BLUE} rot={1}>4'-7"</T>
    <T x={102} y={365} w={30} c={BLUE} rot={1}>4'-5"</T>
    <T x={102} y={455} w={36} c={BLUE} rot={1}>1'-0"</T>
    <T x={102} y={532} w={50} c={BLUE} rot={1}>1'-6 1/2"</T>
    <T x={102} y={575} w={20} c={BLUE} rot={1}>10"</T>
    <T x={102} y={665} w={35} c={BLUE} rot={1}>4'-0"</T>
    <T x={230} y={391} w={34} c={BLUE}>4'-0"</T>
    <T x={528} y={599} w={39} c={BLUE}>14'-0"</T>
    <T x={829} y={599} w={35} c={BLUE}>4'-0"</T>
    <T x={753} y={510} w={17} c={BLUE} sz={14} rot={1}>11"</T>
  </Drawing>
);

const Misc = () => (
  <MiscPal>
    <MiscHead>Miscellaneous<MiscClose>×</MiscClose></MiscHead>
    <MiscRow $h={20} $pad={5}><Icon n="miscA" /><Tri $d="d" /><MiscDiv /></MiscRow>
    <MiscRow $h={22} $pad={4}><MiscText><u>O</u>ptions</MiscText><Tri $d="d" /><Icon n="miscB" /></MiscRow>
    <MiscRow $h={17} $pad={7}><Icon n="spin" s={12} /><MiscText>Show <u>G</u>host Story</MiscText></MiscRow>
  </MiscPal>
);

const row1 = ["bx", "snapA", "snapB", "snapC", "plus", "gridA", "gridB"];
const row2a = ["geoA", "geoB", "geoC", "geoD", "geoE", "geoF", "geoG"];
const row2b = ["geoH", "geoI", "geoJ"];
const statusIcons = ["zoomPm", "zoomIn", "zoomOut", "hand", "zoomFit", "zoomPrev", "zoomNext"];
const quick = ["ie", "sky", "outlook", "mBtn", "folder", "folder", "qApp", "qWhite", "acad", "sky", "ie"];

export default function App() {
  return (
    <>
      <Global />
      <Frame>
        <TitleBar>
          <Icon n="acad" s={14} />
          <TitleText>Englehart Kitchen - ArchiCAD 9</TitleText>
        </TitleBar>
        <Client>
          <MenuBar>{menus.map(([m, w]) => <MenuItem key={m} $w={w}>{m}</MenuItem>)}</MenuBar>
          <ToolBar>
            {topTools.map((t, i) =>
              typeof t === "number" ? <TSep key={i} $w={t || 6} />
                : typeof t === "string" ? <TBtn key={i}><Icon n={t} s={15} /></TBtn>
                : <TBtn key={i} $on={t.on}><Icon n={t.n} s={15} /></TBtn>
            )}
            <ToolEnd />
          </ToolBar>
          <Workspace>
            <Palette>
              <PaletteHead><span>J</span><span>×</span></PaletteHead>
              <PaletteList>
                {palette.map((p, i) => <PaletteTool key={p} $on={i === 0}><Icon n={p} s={i === 0 ? 14 : 16} /></PaletteTool>)}
              </PaletteList>
            </Palette>
            <Main>
              <InfoArea>
                <InfoStrip><InfoClose>×</InfoClose><InfoLabel>Info Box</InfoLabel></InfoStrip>
                <InfoPanel>
                  <InfoBtn><Icon n="infoA" s={14} /><Tri /></InfoBtn>
                  <InfoBtn><Icon n="infoB" s={14} /><Tri /></InfoBtn>
                  <InfoBtn $on><Icon n="infoC" s={14} /></InfoBtn>
                  <InfoArrowBox><Icon n="arrow" s={13} /></InfoArrowBox>
                </InfoPanel>
              </InfoArea>
              <Mdi>
                <DocWindow>
                  <DocTitle>
                    <Icon n="docTitle" s={13} />
                    <DocTitleText>Englehart Kitchen / -2, FOUNDATION PLAN</DocTitleText>
                    <WinBtn><svg width="8" height="8" viewBox="0 0 8 8"><rect x="0" y="5" width="5" height="2" fill="#fff" /></svg></WinBtn>
                    <WinBtn><svg width="10" height="9" viewBox="0 0 10 9"><rect x=".5" y="1" width="9" height="7.5" fill="none" stroke="#fff" /><rect x="0" y="0" width="10" height="2" fill="#fff" /></svg></WinBtn>
                    <WinBtn $red><svg width="9" height="9" viewBox="0 0 9 9"><path d="M1 1l7 7M8 1l-7 7" stroke="#fff" strokeWidth="1.8" /></svg></WinBtn>
                  </DocTitle>
                  <CanvasRow>
                    <Plan />
                    <VScroll>
                      <ScrollBtn><Tri $d="u" /></ScrollBtn>
                      <VThumb />
                    </VScroll>
                    <Misc />
                  </CanvasRow>
                  <StatusBar>
                    <StatPad />
                    <StatCell $w={17} $on><Icon n="qStat1" s={12} /></StatCell>
                    <StatPad />
                    <StatCell $w={18}><Icon n="zoomFit" s={12} /></StatCell>
                    <StatCell $w={75}>1/4"&nbsp;&nbsp;&nbsp;=&nbsp;&nbsp;&nbsp;1'-0"</StatCell>
                    <StatCell $w={57}>178 %</StatCell>
                    <StatCell $w={19}><Tri /></StatCell>
                    {statusIcons.map((n, i) => <StatCell key={n + i} $w={i === 0 ? 18 : 19}><Icon n={n} s={12} /></StatCell>)}
                    <StatCell $w={11}><Tri $d="l" /></StatCell>
                    <HTrack $w={195} />
                    <HThumb />
                    <HTrack $w={335} />
                    <StatCell $w={14}><Tri /></StatCell>
                    <Grip />
                  </StatusBar>
                </DocWindow>
              </Mdi>
            </Main>
          </Workspace>
          <Bottom>
            <BarRow $left={77}>
              <Grab />
              {row1.map((n, i) => <BarBtn key={n} $on={i === 2 || i === 4} $w={21.5}><Icon n={n} s={i === 0 ? 14 : 16} /></BarBtn>)}
              <BarGap $w={8} />
              <APill>A</APill>
              <CoordGroup $w={96}>
                <CoordLine><CoordLabel>Δx:</CoordLabel><CoordValue>10'-4 3/32"</CoordValue></CoordLine>
                <CoordLine><CoordLabel>Δy:</CoordLabel><CoordValue>15'-2 23/32"</CoordValue></CoordLine>
              </CoordGroup>
              <APill>A</APill>
              <CoordGroup $w={97}>
                <CoordLine><CoordLabel>Δr:</CoordLabel><CoordValue>18'-4 7/8"</CoordValue></CoordLine>
                <CoordLine><CoordLabel>a:</CoordLabel><CoordValue>55.82°</CoordValue></CoordLine>
              </CoordGroup>
              {["figA", "figB", "figC", "figD"].map(n => <BarBtn key={n} $w={20.5}><Icon n={n} /></BarBtn>)}
              <CoordGroup $w={98} $pad={6} $end={4}>
                <ZLine><ZText $fill>Δz: -8'-6 1/2"</ZText></ZLine>
                <ZLine><ZText>to Project Zero</ZText><MiniBtn><Tri /></MiniBtn></ZLine>
              </CoordGroup>
            </BarRow>
            <BarRow $left={167}>
              <Grab />
              <BarGap $w={1} />
              {row2a.map(n => <BarBtn key={n} $w={23.4}><Icon n={n} /></BarBtn>)}
              <BarGap $w={4} />
              {row2b.map((n, i) => <BarBtn key={n} $w={23} $on={i === 0}><Icon n={n} /></BarBtn>)}
              <BarGap $w={4} />
              <BarBtn $w={23}><Icon n="boxA" /></BarBtn>
              <BarBtn $w={23} $on><Icon n="boxB" /></BarBtn>
              <BarBtn $w={25}><Icon n="magSnap" /></BarBtn>
              <BarGap $w={6} />
              <BarBtn $w={17}><Icon n="xBig" /></BarBtn>
              <BarBtn $w={17} $on><Icon n="lineSm" /></BarBtn>
              <BarBtn $w={17}><Icon n="xSm" /></BarBtn>
              <HalfBox>
                <HalfTop>Half<MiniBtn><Tri /></MiniBtn></HalfTop>
                <HalfSub>2</HalfSub>
              </HalfBox>
              <BarGap $w={5} />
              <GhostBtn>OK</GhostBtn>
              <BarGap $w={5} />
              <GhostBtn>Cancel</GhostBtn>
            </BarRow>
          </Bottom>
        </Client>
        <Taskbar>
          <StartBtn><Icon n="flag" s={14} />start</StartBtn>
          <Quick>{quick.map((n, i) => <Icon key={i} n={n} />)}</Quick>
          <TaskBtn><Icon n="outlook" s={14} /><TaskLabel>5 Microsoft Outlook</TaskLabel><Tri $d="d" $c="#fff" /></TaskBtn>
          <TaskBtn $on><Icon n="acad" s={14} /><TaskLabel>3 ArchiCAD 9.0.0 C...</TaskLabel><Tri $d="d" $c="#fff" /></TaskBtn>
          <TaskBtn><Icon n="folder" s={14} /><TaskLabel>2 Windows Explorer</TaskLabel><Tri $d="d" $c="#fff" /></TaskBtn>
          <TaskBtn><Icon n="ieDoc" s={14} /><TaskLabel $wide>http://www.physfac....</TaskLabel></TaskBtn>
          <Tray>
            <Icon n="trayA" s={15} /><Icon n="trayB" s={15} /><Icon n="trayC" s={15} /><Icon n="trayD" s={15} />
            <Clock>2:07 PM</Clock>
          </Tray>
        </Taskbar>
      </Frame>
      <Blank />
    </>
  );
}
